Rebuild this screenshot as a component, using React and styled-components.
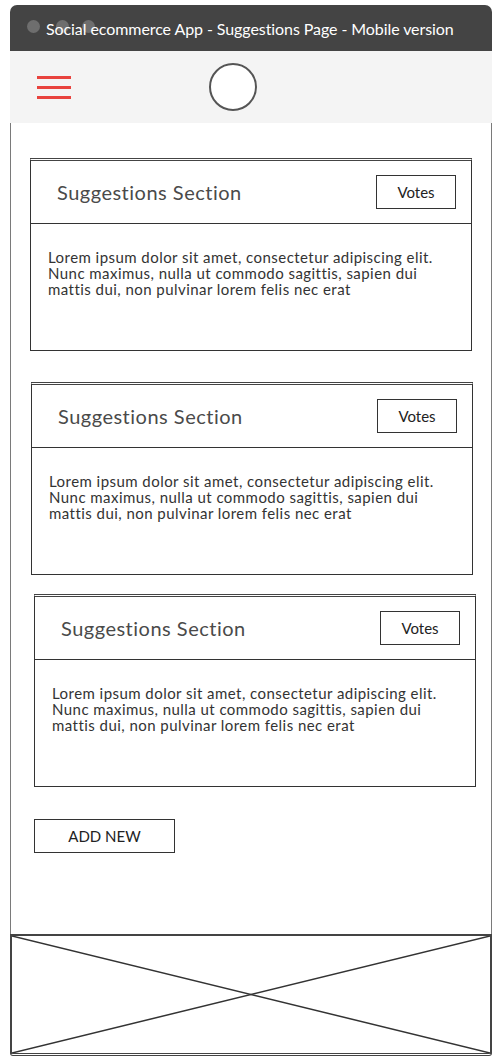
import React from "react";
import styled, { createGlobalStyle } from "styled-components";

const GlobalStyle = createGlobalStyle`
  html, body { margin: 0; padding: 0; background: #ffffff; }
  body { font-family: "Lato", "Open Sans", sans-serif; }
`;

const Window = styled.div`
  margin: 5px 0 0 10px;
  width: 482px;
  display: flex;
  flex-direction: column;
`;

const TitleBar = styled.div`
  position: relative;
  height: 46px;
  background: #444444;
  border-radius: 7px 7px 0 0;
  display: flex;
  align-items: center;
  padding-left: 36px;
  color: #ffffff;
  font-size: 16px;
  letter-spacing: -0.08px;
`;

const Dot = styled.span`
  position: absolute;
  top: 15px;
  left: ${(p) => p.$left}px;
  width: 13px;
  height: 13px;
  border-radius: 50%;
  background: #6e6e6e;
`;

const TitleText = styled.span`
  position: relative;
  white-space: nowrap;
`;

const NavBar = styled.div`
  height: 72px;
  background: #f4f4f4;
  display: flex;
  align-items: center;
  padding-left: 27px;
`;

const Burger = styled.div`
  width: 34px;
  display: flex;
  flex-direction: column;
  gap: 7px;
`;

const BurgerLine = styled.span`
  display: block;
  height: 3px;
  background: #e8433e;
`;

const Logo = styled.div`
  margin-left: 138px;
  width: 44px;
  height: 44px;
  border-radius: 50%;
  border: 2px solid #555555;
  background: #ffffff;
`;

const Content = styled.div`
  border-left: 1.5px solid #7a7a7a;
  border-right: 1.5px solid #7a7a7a;
  padding: 35px 0 81px;
  display: flex;
  flex-direction: column;
  align-items: flex-start;
`;

const Card = styled.section`
  box-sizing: border-box;
  width: 442px;
  height: 193px;
  margin-left: ${(p) => p.$offset}px;
  margin-top: ${(p) => p.$top}px;
  border: 1.5px solid #333333;
  border-top: 3px double #444444;
  display: flex;
  flex-direction: column;
`;

const CardHeader = styled.div`
  box-sizing: border-box;
  height: 63px;
  border-bottom: 1.5px solid #333333;
  display: flex;
  align-items: center;
  justify-content: space-between;
  padding: 0 15px 0 26px;
`;

const CardTitle = styled.h2`
  margin: 0;
  font-weight: 400;
  font-size: 20px;
  letter-spacing: 0.5px;
  color: #4a4a4a;
`;

const VotesButton = styled.button`
  box-sizing: border-box;
  width: 80px;
  height: 34px;
  border: 1.5px solid #333333;
  background: #ffffff;
  font-family: inherit;
  font-size: 15px;
  color: #222222;
  padding: 0;
`;

const CardBody = styled.p`
  margin: 0;
  padding: 25px 16px 0 17px;
  font-size: 15px;
  line-height: 16px;
  letter-spacing: 0.45px;
  color: #333333;
`;

const AddButton = styled.button`
  box-sizing: border-box;
  margin: 32px 0 0 23px;
  width: 141px;
  height: 34px;
  border: 1.5px solid #333333;
  background: #ffffff;
  font-family: inherit;
  font-size: 15px;
  color: #222222;
  padding: 0;
`;

const Placeholder = styled.div`
  box-sizing: border-box;
  height: 122px;
  border: 2px solid #444444;
  border-bottom: 3px double #444444;
  border-radius: 0 0 3px 3px;
  display: flex;
`;

const XDrawing = styled.svg`
  flex: 1;
  display: block;
`;

const cards = [
  { offset: 19, top: 0 },
  { offset: 20, top: 31 },
  { offset: 23, top: 19 },
];

const lorem =
  "Lorem ipsum dolor sit amet, consectetur adipiscing elit. Nunc maximus, nulla ut commodo sagittis, sapien dui mattis dui, non pulvinar lorem felis nec erat";

export default function App() {
  return (
    <>
      <GlobalStyle />
      <Window>
        <TitleBar>
          <Dot $left={17} />
          <Dot $left={46} />
          <Dot $left={72} />
          <TitleText>Social ecommerce App - Suggestions Page - Mobile version</TitleText>
        </TitleBar>
        <NavBar>
          <Burger>
            <BurgerLine />
            <BurgerLine />
            <BurgerLine />
          </Burger>
          <Logo />
        </NavBar>
        <Content>
          {cards.map((c, i) => (
            <Card key={i} $offset={c.offset} $top={c.top}>
              <CardHeader>
                <CardTitle>Suggestions Section</CardTitle>
                <VotesButton>Votes</VotesButton>
              </CardHeader>
              <CardBody>{lorem}</CardBody>
            </Card>
          ))}
          <AddButton>ADD NEW</AddButton>
        </Content>
        <Placeholder>
          <XDrawing viewBox="0 0 100 100" preserveAspectRatio="none">
            <line x1="0" y1="0" x2="100" y2="100" stroke="#333" strokeWidth="1.5" vectorEffect="non-scaling-stroke" />
            <line x1="100" y1="0" x2="0" y2="100" stroke="#333" strokeWidth="1.5" vectorEffect="non-scaling-stroke" />
          </XDrawing>
        </Placeholder>
      </Window>
    </>
  );
}
